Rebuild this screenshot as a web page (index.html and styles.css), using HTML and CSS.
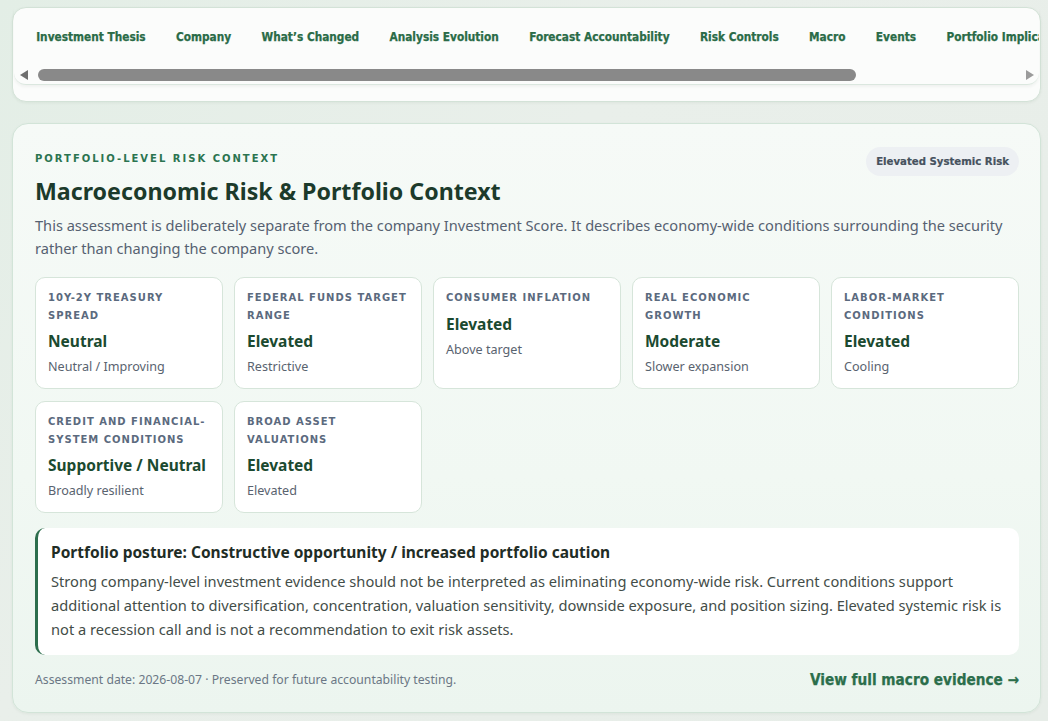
FILE: index.html
```html
<!DOCTYPE html>
<html lang="en">
<head>
<meta charset="utf-8">
<title>Macro</title>
<link rel="stylesheet" href="styles.css">
</head>
<body>
<div class="page">
  <div class="navcard">
    <div class="navscroll">
      <nav class="tabs">
        <a class="tab">Investment Thesis</a>
        <a class="tab">Company</a>
        <a class="tab">What’s Changed</a>
        <a class="tab">Analysis Evolution</a>
        <a class="tab">Forecast Accountability</a>
        <a class="tab">Risk Controls</a>
        <a class="tab">Macro</a>
        <a class="tab">Events</a>
        <a class="tab">Portfolio Implications</a>
        <a class="tab">Sources</a>
      </nav>
      <div class="scrollbar">
        <span class="arrow arrow-left"></span>
        <div class="track"><div class="thumb"></div></div>
        <span class="arrow arrow-right"></span>
      </div>
    </div>
  </div>

  <section class="macro">
    <div class="macro-head">
      <div>
        <div class="eyebrow">Portfolio-Level Risk Context</div>
        <h2 class="title">Macroeconomic Risk &amp; Portfolio Context</h2>
      </div>
      <span class="badge">Elevated Systemic Risk</span>
    </div>
    <p class="intro">This assessment is deliberately separate from the company Investment Score. It describes economy-wide conditions surrounding the security rather than changing the company score.</p>

    <div class="grid">
      <div class="ind">
        <div class="ind-label">10Y-2Y Treasury Spread</div>
        <div class="ind-value">Neutral</div>
        <div class="ind-sub">Neutral / Improving</div>
      </div>
      <div class="ind">
        <div class="ind-label">Federal Funds Target Range</div>
        <div class="ind-value">Elevated</div>
        <div class="ind-sub">Restrictive</div>
      </div>
      <div class="ind">
        <div class="ind-label">Consumer Inflation</div>
        <div class="ind-value">Elevated</div>
        <div class="ind-sub">Above target</div>
      </div>
      <div class="ind">
        <div class="ind-label">Real Economic Growth</div>
        <div class="ind-value">Moderate</div>
        <div class="ind-sub">Slower expansion</div>
      </div>
      <div class="ind">
        <div class="ind-label">Labor-Market Conditions</div>
        <div class="ind-value">Elevated</div>
        <div class="ind-sub">Cooling</div>
      </div>
      <div class="ind">
        <div class="ind-label">Credit and Financial-System Conditions</div>
        <div class="ind-value">Supportive / Neutral</div>
        <div class="ind-sub">Broadly resilient</div>
      </div>
      <div class="ind">
        <div class="ind-label">Broad Asset Valuations</div>
        <div class="ind-value">Elevated</div>
        <div class="ind-sub">Elevated</div>
      </div>
    </div>

    <div class="posture">
      <div class="posture-title">Portfolio posture: Constructive opportunity / increased portfolio caution</div>
      <p class="posture-body">Strong company-level investment evidence should not be interpreted as eliminating economy-wide risk. Current conditions support additional attention to diversification, concentration, valuation sensitivity, downside exposure, and position sizing. Elevated systemic risk is not a recession call and is not a recommendation to exit risk assets.</p>
    </div>

    <div class="foot">
      <span class="date">Assessment date: 2026-08-07 · Preserved for future accountability testing.</span>
      <a class="more">View full macro evidence →</a>
    </div>
  </section>
</div>
</body>
</html>
```

FILE: styles.css
```css
* { box-sizing: border-box; }
html, body { margin: 0; padding: 0; }
body {
  background: linear-gradient(135deg, #e3eee6 0%, #e9efea 40%, #e7ede8 100%);
  font-family: "Noto Sans", "Liberation Sans", sans-serif;
  min-height: 721px;
  overflow: hidden;
}
.page {
  padding: 7px 7px 0 12px;
  display: flex;
  flex-direction: column;
  gap: 21px;
}
.navcard {
  background: #fbfcfb;
  border: 1px solid #d3e2d7;
  border-radius: 14px;
  height: 95px;
  padding: 0 1px;
  box-shadow: 0 1px 3px rgba(30, 60, 40, 0.06);
}
.navscroll {
  border-bottom: 1px solid #dbe7df;
  border-radius: 0 0 12px 12px;
  height: 77px;
  overflow: hidden;
  box-shadow: 0 2px 3px rgba(30, 60, 40, 0.05);
}
.tabs {
  display: flex;
  white-space: nowrap;
  padding: 19px 0 0 7px;
  height: 61px;
}
.tab {
  font-family: "DejaVu Sans Condensed", "Liberation Sans", sans-serif;
  font-weight: bold;
  font-size: 11.75px;
  -webkit-text-stroke: 0.25px #2a6b47;
  color: #2a6b47;
  padding: 3px 15.2px;
  flex: none;
}
.scrollbar {
  display: flex;
  align-items: center;
  height: 12px;
  padding: 0 5px 0 6px;
}
.arrow { width: 0; height: 0; flex: none; }
.arrow-left {
  border-top: 5px solid transparent;
  border-bottom: 5px solid transparent;
  border-right: 8px solid #6f6f6f;
}
.arrow-right {
  border-top: 5px solid transparent;
  border-bottom: 5px solid transparent;
  border-left: 8px solid #9b9b9b;
}
.track { flex: 1; height: 12px; padding-left: 10px; }
.thumb {
  width: 818px;
  height: 12px;
  border-radius: 6px;
  background: #898989;
}

.macro {
  background: linear-gradient(180deg, #f6faf7 0%, #f1f8f3 60%, #ecf5ef 100%);
  border: 1px solid #d2e4d8;
  border-radius: 16px;
  padding: 23px 21px 20px 22px;
  height: 590px;
  box-shadow: 0 1px 3px rgba(30, 60, 40, 0.06);
}
.macro-head {
  display: flex;
  justify-content: space-between;
  align-items: flex-start;
}
.eyebrow {
  font-family: "DejaVu Sans", "Liberation Sans", sans-serif;
  font-weight: bold;
  font-size: 10px;
  letter-spacing: 2px;
  text-transform: uppercase;
  color: #2b7450;
  margin-top: 6px;
}
.title {
  margin: 10px 0 0;
  font-size: 23.2px;
  font-weight: bold;
  color: #1c3a2b;
  line-height: 34px;
}
.badge {
  font-family: "DejaVu Sans Condensed", "Liberation Sans", sans-serif;
  font-weight: bold;
  font-size: 11.3px;
  -webkit-text-stroke: 0.2px #46525e;
  line-height: 15px;
  color: #46525e;
  background: #edf0f3;
  border-radius: 15px;
  padding: 7px 10px;
}
.intro {
  margin: 6px 0 0;
  font-size: 14.6px;
  line-height: 23px;
  color: #566171;
}
.grid {
  display: grid;
  grid-template-columns: repeat(5, 1fr);
  column-gap: 11px;
  row-gap: 12px;
  margin-top: 17px;
}
.ind {
  background: #ffffff;
  border: 1px solid #d6e5da;
  border-radius: 10px;
  padding: 11px 12px 12px;
  height: 112px;
}
.ind-label {
  font-family: "DejaVu Sans", "Liberation Sans", sans-serif;
  font-weight: bold;
  font-size: 10px;
  letter-spacing: 1px;
  line-height: 17.5px;
  text-transform: uppercase;
  color: #5b6a7e;
}
.ind-value {
  font-size: 15.5px;
  font-weight: bold;
  color: #1b4a30;
  margin-top: 6px;
  line-height: 22px;
}
.ind-sub {
  font-size: 12.6px;
  color: #59636f;
  margin-top: 7px;
  line-height: 16px;
}
.posture {
  background: #ffffff;
  border-left: 3px solid #2d6e4d;
  border-radius: 10px;
  margin-top: 15px;
  padding: 14px 12px 14px 13px;
}
.posture-title {
  font-size: 15.5px;
  font-weight: bold;
  color: #1f2d26;
  line-height: 20px;
}
.posture-body {
  margin: 7px 0 0;
  font-size: 14.65px;
  line-height: 24px;
  color: #434d48;
}
.foot {
  display: flex;
  justify-content: space-between;
  align-items: center;
  margin-top: 15px;
  line-height: 20px;
}
.date {
  font-size: 12.2px;
  color: #6b7785;
}
.more {
  font-family: "DejaVu Sans Condensed", "Liberation Sans", sans-serif;
  font-size: 15.2px;
  font-weight: bold;
  -webkit-text-stroke: 0.25px #2b6e4b;
  color: #2b6e4b;
}
```
